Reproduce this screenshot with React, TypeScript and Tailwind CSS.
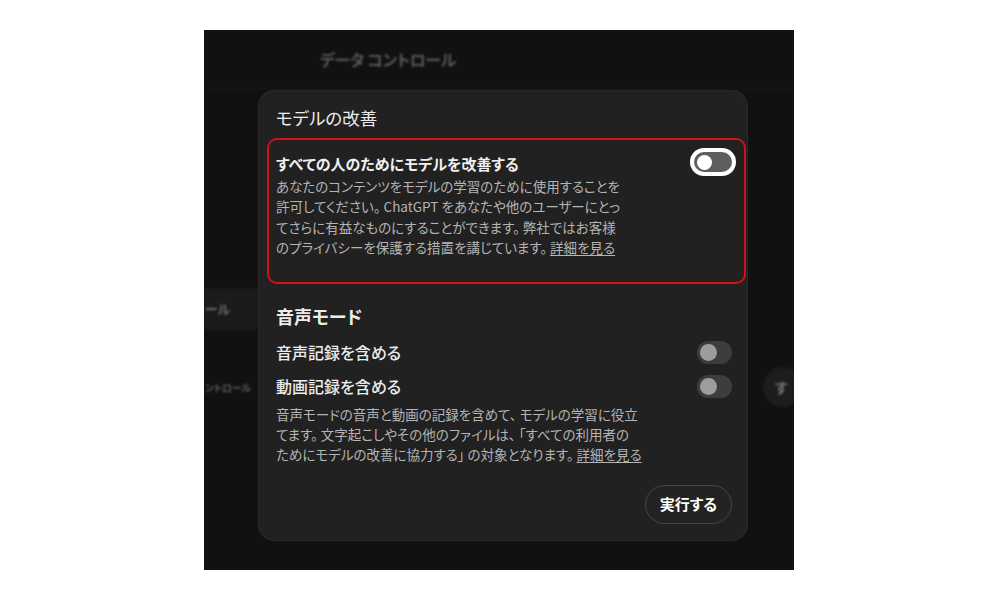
import React from 'react';

const jp = "font-['Noto_Sans_CJK_JP','Noto_Sans',sans-serif] [font-feature-settings:'palt']";

const FocusToggle: React.FC = () => (
  <div className="w-[46px] h-[28px] rounded-full bg-white p-[4px] shrink-0">
    <div className="h-full w-full rounded-full bg-[#5e5e5e] flex items-center pl-[3px]">
      <div className="w-[15px] h-[15px] rounded-full bg-white" />
    </div>
  </div>
);

const MutedToggle: React.FC = () => (
  <div className="w-[35px] h-[23px] rounded-full bg-[#3d3d3d] flex items-center pl-[3px] shrink-0">
    <div className="w-[17px] h-[17px] rounded-full bg-[#9d9d9d]" />
  </div>
);

// dimmed settings page behind the dialog
const Backdrop: React.FC = () => (
  <div className="absolute inset-0 blur-[1px] select-none">
    <div className="h-[59px] border-b border-[#1c1c1c] pl-[116px] flex items-center">
      <span className="text-[16px] font-bold text-[#585858] tracking-tight">データ コントロール</span>
    </div>
    <div className="flex">
      <div className="w-[54px] pt-[199px] flex flex-col">
        <div className="h-[42px] bg-[#1b1b1b] flex items-center pl-[1px] text-[13px] font-bold text-[#6a6a6a] whitespace-nowrap">
          ール
        </div>
        <div className="mt-[36px] h-[42px] flex items-center pl-[1px] text-[10px] font-bold text-[#5e5e5e] whitespace-nowrap tracking-tight">
          ントロール
        </div>
      </div>
      <div className="flex-1 flex justify-end pt-[278px]">
        <div className="w-[40px] h-[40px] rounded-full bg-[#1d1d1d] mr-[-9px] flex items-center pl-[12px] text-[14px] font-bold text-[#7a7a7a]">
          す
        </div>
      </div>
    </div>
  </div>
);

export default function App() {
  return (
    <div className={`min-h-[600px] bg-white pl-[204px] pt-[30px] ${jp}`}>
      <div className="relative w-[590px] h-[540px] overflow-hidden bg-[#111111]">
        <Backdrop />
        <div className="relative ml-[54px] mt-[60px] w-[490px] h-[451px] rounded-[16px] bg-[#212121] border border-[#2a2a2a] flex flex-col">
          <div className="pl-[17px] pt-[13px] h-[41px] text-[17.5px] leading-[28px] text-[#ececec]">モデルの改善</div>

          <div className="ml-[8px] mr-[1px] mt-[6px] h-[146px] rounded-[10px] border-2 border-[#d0101a] pl-[7px] pr-[8px] pt-[8px]">
            <div className="flex items-start justify-between">
              <div className="pt-[4px] text-[15px] leading-[24px] font-semibold text-[#f0f0f0]">
                すべての人のためにモデルを改善する
              </div>
              <FocusToggle />
            </div>
            <p className="text-[13.5px] leading-[20.3px] text-[#b4b4b4] whitespace-nowrap">
              あなたのコンテンツをモデルの学習のために使用することを<br />
              許可してください。 ChatGPT をあなたや他のユーザーにとっ<br />
              てさらに有益なものにすることができます。 弊社ではお客様<br />
              のプライバシーを保護する措置を講じています。 <span className="underline underline-offset-2">詳細を見る</span>
            </p>
          </div>

          <div className="pl-[17px] pr-[15px] flex flex-col">
            <div className="mt-[18px] text-[18px] leading-[28px] font-bold text-[#ececec]">音声モード</div>
            <div className="mt-[10px] h-[24px] flex items-center justify-between">
              <span className="text-[16px] font-medium text-[#ececec]">音声記録を含める</span>
              <MutedToggle />
            </div>
            <div className="mt-[10px] h-[24px] flex items-center justify-between">
              <span className="text-[16px] font-medium text-[#ececec]">動画記録を含める</span>
              <MutedToggle />
            </div>
            <p className="mt-[6px] text-[13.5px] leading-[20px] text-[#b4b4b4] whitespace-nowrap">
              音声モードの音声と動画の記録を含めて、 モデルの学習に役立<br />
              てます。 文字起こしやその他のファイルは、 「すべての利用者の<br />
              ためにモデルの改善に協力する」 の対象となります。 <span className="underline underline-offset-2">詳細を見る</span>
            </p>
            <div className="mt-[21px] flex justify-end">
              <button className="h-[39px] px-[14px] rounded-full border border-[#474747] bg-[#232323] text-[15px] font-bold text-white">
                実行する
              </button>
            </div>
          </div>
        </div>
      </div>
    </div>
  );
}
